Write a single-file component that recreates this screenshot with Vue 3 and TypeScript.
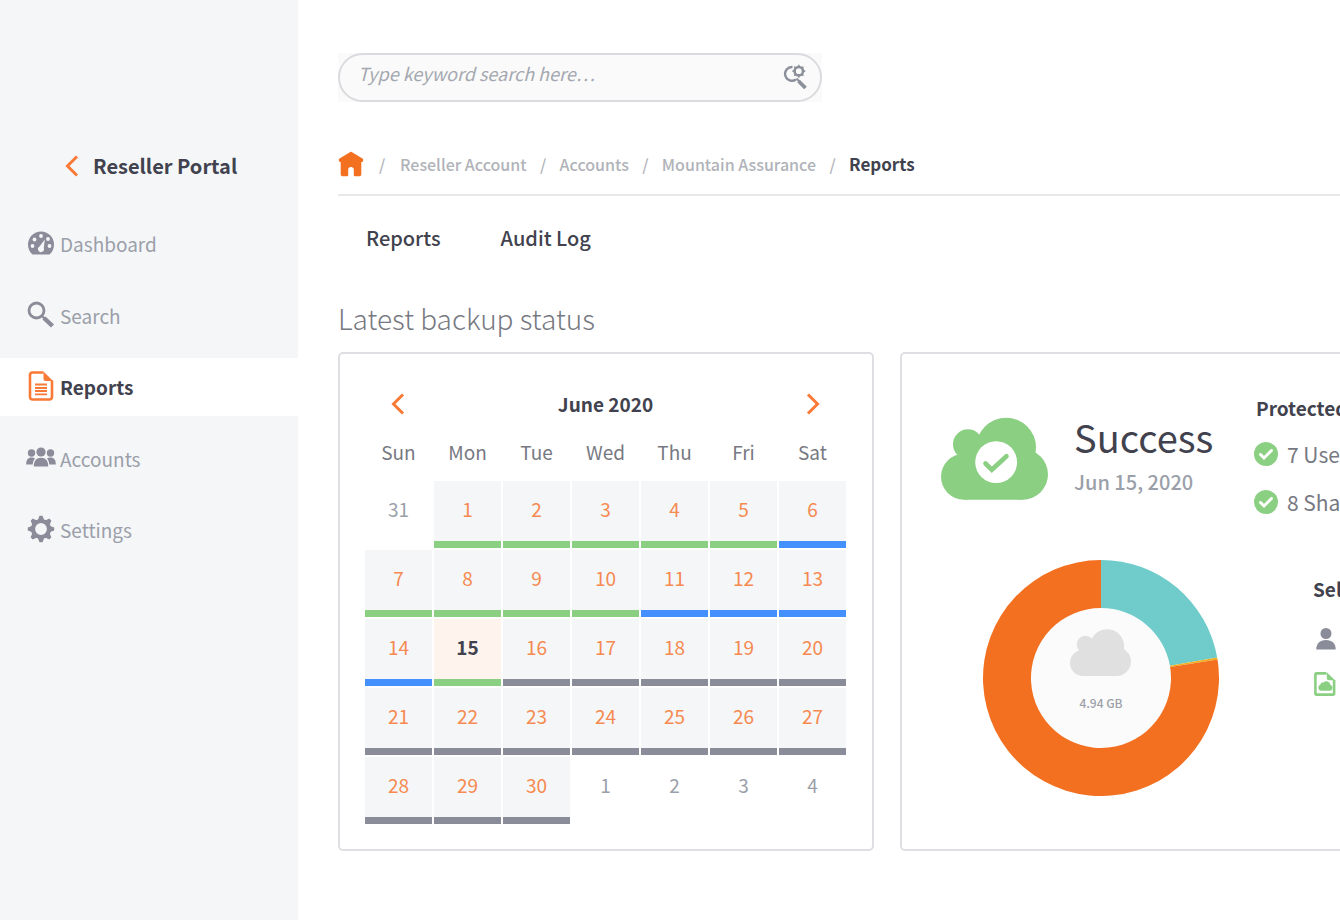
<script setup lang="ts">
import { ref } from 'vue'

type Status = 'ok' | 'partial' | 'none' | 'outside'

interface Day {
  label: number
  status: Status
}

interface NavItem {
  id: string
  label: string
}

const navItems: NavItem[] = [
  { id: 'dashboard', label: 'Dashboard' },
  { id: 'search', label: 'Search' },
  { id: 'reports', label: 'Reports' },
  { id: 'accounts', label: 'Accounts' },
  { id: 'settings', label: 'Settings' },
]
const active = ref('reports')

const crumbs = ['Reseller Account', 'Accounts', 'Mountain Assurance']
const weekdays = ['Sun', 'Mon', 'Tue', 'Wed', 'Thu', 'Fri', 'Sat']
const partialDays = [6, 11, 12, 13, 14]
const selected = ref(15)
const query = ref('')

function statusOf(day: number): Status {
  if (partialDays.includes(day)) return 'partial'
  return day <= 15 ? 'ok' : 'none'
}

const days: Day[] = [
  { label: 31, status: 'outside' },
  ...Array.from({ length: 30 }, (_, i): Day => ({ label: i + 1, status: statusOf(i + 1) })),
  ...[1, 2, 3, 4].map((label): Day => ({ label, status: 'outside' })),
]
const weeks = Array.from({ length: 5 }, (_, w) => days.slice(w * 7, w * 7 + 7))

const protectedItems = ['7 Users', '8 Shared Drives']

function point(radius: number, degrees: number): string {
  const a = (degrees * Math.PI) / 180
  return `${118 + radius * Math.sin(a)} ${118 - radius * Math.cos(a)}`
}

function slice(from: number, to: number): string {
  const large = to - from > 180 ? 1 : 0
  return `M${point(118, from)}A118 118 0 ${large} 1 ${point(118, to)}L${point(70, to)}A70 70 0 ${large} 0 ${point(70, from)}Z`
}

const slices = [
  { path: slice(0, 80), color: '#6fcccb' },
  { path: slice(80, 81), color: '#f2b01e' },
  { path: slice(81, 360), color: '#f37021' },
]

const gearTeeth = [0, 45, 90, 135, 180, 225, 270, 315]
</script>

<template>
  <div class="app">
    <aside class="sidebar">
      <a class="back" href="#portal">
        <svg class="chevron" viewBox="0 0 14 22" aria-hidden="true"><path d="M12 1.500 2.500 11 12 20.500" /></svg>
        <span>Reseller Portal</span>
      </a>
      <nav class="nav" aria-label="Main">
        <a
          v-for="item in navItems"
          :key="item.id"
          class="nav-item"
          :class="{ active: item.id === active }"
          :href="'#' + item.id"
          @click="active = item.id"
        >
          <svg v-if="item.id === 'dashboard'" class="nav-icon" viewBox="0 0 30 30" aria-hidden="true">
            <path fill="currentColor" d="M6.500 26.500C3.500 24 2 20.500 2 16.500a13 13 0 0 1 26 0c0 4-1.500 7.500-4.500 10Z" />
            <g fill="#f4f6f8">
              <circle cx="6.500" cy="18" r="1.900" /><circle cx="8.500" cy="11.500" r="1.900" />
              <circle cx="15" cy="8" r="1.900" /><circle cx="22" cy="11" r="1.900" /><circle cx="23.500" cy="18" r="1.900" />
              <path d="m18.800 11.500-1 8.500a3 3 0 1 1-4.300-1.500Z" />
            </g>
          </svg>
          <svg v-else-if="item.id === 'search'" class="nav-icon" viewBox="0 0 30 30" aria-hidden="true">
            <circle cx="10.500" cy="10.500" r="7.500" fill="none" stroke="currentColor" stroke-width="2.800" />
            <path d="m18 18 8.500 8" stroke="currentColor" stroke-width="4.400" />
            <path d="m15.500 15.500 4 4" stroke="currentColor" stroke-width="2.400" />
          </svg>
          <svg v-else-if="item.id === 'reports'" class="nav-icon accent" viewBox="0 0 30 30" aria-hidden="true">
            <path d="M17.500 1.500H6.500a2.500 2.500 0 0 0-2.500 2.500v22a2.500 2.500 0 0 0 2.500 2.500h17A2.500 2.500 0 0 0 26 26V9.500" fill="none" stroke="currentColor" stroke-width="2.600" />
            <path d="M17.500.500 27 10h-7.500a2 2 0 0 1-2-2Z" fill="currentColor" />
            <path d="M9 13.500h12M9 17h12M9 20h12M9 23.300h12" stroke="currentColor" stroke-width="1.800" />
          </svg>
          <svg v-else-if="item.id === 'accounts'" class="nav-icon" viewBox="0 0 30 30" aria-hidden="true">
            <g fill="currentColor">
              <circle cx="5.500" cy="10" r="3.700" /><circle cx="24.500" cy="10" r="3.700" />
              <circle cx="15" cy="9" r="4.600" />
              <path d="M.2 21.500c0-5 1.800-7 5.300-7 1.500 0 2.700.3 3.600 1-1.600 1.500-2.200 3.500-2.300 6Z" />
              <path d="M29.800 21.500c0-5-1.800-7-5.300-7-1.500 0-2.700.3-3.600 1 1.600 1.500 2.200 3.500 2.300 6Z" />
              <path d="M7.800 23.500c0-6 2.400-8.800 7.200-8.800s7.200 2.800 7.200 8.800Z" />
            </g>
          </svg>
          <svg v-else class="nav-icon" viewBox="0 0 30 30" aria-hidden="true">
            <circle cx="15" cy="15" r="8" fill="none" stroke="currentColor" stroke-width="4.200" />
            <path v-for="deg in gearTeeth" :key="deg" d="M11.700 6.500 13.500 1.800h3l1.800 4.700Z" fill="currentColor" :transform="`rotate(${deg} 15 15)`" />
          </svg>
          <span>{{ item.label }}</span>
        </a>
      </nav>
    </aside>

    <main class="main">
      <form class="search" role="search" @submit.prevent>
        <div class="search-pill">
          <input v-model="query" type="search" aria-label="Keyword search" placeholder="Type keyword search here…" />
          <button type="submit" aria-label="Search">
            <svg viewBox="0 0 26 26" aria-hidden="true">
              <path d="M10.500 3A6.900 6.900 0 1 0 14 15.500" fill="none" stroke="currentColor" stroke-width="2.400" />
              <circle cx="16.800" cy="7.200" r="4.200" fill="none" stroke="currentColor" stroke-width="2.600" />
              <path v-for="deg in gearTeeth" :key="deg" d="M15.700 2.800 16.200.700h1.200l.5 2.100Z" fill="currentColor" :transform="`rotate(${deg} 16.800 7.200)`" />
              <path d="m14.500 14.500 3 3" stroke="currentColor" stroke-width="2" />
              <path d="m16.500 17 7 7" stroke="currentColor" stroke-width="3.800" />
            </svg>
          </button>
        </div>
      </form>

      <nav class="crumbs" aria-label="Breadcrumb">
        <a class="home" href="#home" aria-label="Home">
          <svg viewBox="0 0 26 26" aria-hidden="true">
            <path fill="currentColor" d="M11.500 1.500a2 2 0 0 1 3 0L24.500 7.500c.9.700.9 1.500.5 2.700-.3.600-.8.800-1.700.8v12.500a1.800 1.800 0 0 1-1.800 1.800h-4.700a1 1 0 0 1-1-1v-5.500a2.800 2.800 0 0 0-5.600 0v5.500a1 1 0 0 1-1 1H4.500a1.800 1.800 0 0 1-1.800-1.800V11c-.9 0-1.400-.2-1.700-.8-.4-1.200-.4-2 .5-2.700Z" />
          </svg>
        </a>
        <template v-for="crumb in crumbs" :key="crumb">
          <span class="sep">/</span>
          <a href="#crumb">{{ crumb }}</a>
        </template>
        <span class="sep">/</span>
        <span class="current" aria-current="page">Reports</span>
      </nav>

      <nav class="tabs" aria-label="Report views">
        <a href="#reports-tab">Reports</a>
        <a href="#audit-log">Audit Log</a>
      </nav>

      <h1>Latest backup status</h1>

      <div class="cards">
        <section class="card calendar" aria-label="Backup calendar">
          <header class="month">
            <button type="button" aria-label="Previous month">
              <svg class="chevron" viewBox="0 0 14 22" aria-hidden="true"><path d="M12 1.500 2.500 11 12 20.500" /></svg>
            </button>
            <h2>June 2020</h2>
            <button type="button" aria-label="Next month">
              <svg class="chevron" viewBox="0 0 14 22" aria-hidden="true"><path d="M2 1.500 11.500 11 2 20.500" /></svg>
            </button>
          </header>
          <table>
            <thead>
              <tr><th v-for="name in weekdays" :key="name" scope="col">{{ name }}</th></tr>
            </thead>
            <tbody>
              <tr v-for="(week, w) in weeks" :key="w">
                <td v-for="(day, d) in week" :key="d">
                  <button
                    v-if="day.status !== 'outside'"
                    type="button"
                    class="day"
                    :class="[day.status, { selected: day.label === selected }]"
                    @click="selected = day.label"
                  >{{ day.label }}</button>
                  <span v-else class="day outside">{{ day.label }}</span>
                </td>
              </tr>
            </tbody>
          </table>
        </section>

        <section class="card details" aria-label="Backup details">
          <div class="summary">
            <svg class="cloud" viewBox="0 0 322 248" aria-hidden="true">
              <g fill="#8bcf83">
                <circle cx="196" cy="91" r="90" /><circle cx="81" cy="81" r="45" />
                <circle cx="69" cy="179" r="69" /><circle cx="246" cy="172" r="76" />
                <path d="M69 100h177v148H69Z" />
              </g>
              <circle cx="166" cy="135" r="63" fill="#fff" />
              <path d="m134 139 19 19 44-41" fill="none" stroke="#8bcf83" stroke-width="14" stroke-linecap="round" />
            </svg>
            <div class="result">
              <strong>Success</strong>
              <time datetime="2020-06-15">Jun 15, 2020</time>
            </div>
            <div class="protected">
              <h3>Protected</h3>
              <ul>
                <li v-for="entry in protectedItems" :key="entry">
                  <svg viewBox="0 0 24 24" aria-hidden="true">
                    <circle cx="12" cy="12" r="12" fill="#8bcf83" />
                    <path d="m6.500 12.500 3.500 3.500 7.500-7.500" fill="none" stroke="#fff" stroke-width="3" stroke-linecap="round" />
                  </svg>
                  <span>{{ entry }}</span>
                </li>
              </ul>
            </div>
          </div>
          <div class="usage">
            <svg class="donut" viewBox="0 0 236 236" role="img" aria-label="Storage used: 4.94 GB">
              <circle cx="118" cy="118" r="71" fill="#fbfbfb" />
              <path v-for="part in slices" :key="part.color" :d="part.path" :fill="part.color" />
              <svg x="87" y="69" width="61" height="47" viewBox="0 0 322 248">
                <g fill="#e0e0e0">
                  <circle cx="196" cy="91" r="90" /><circle cx="81" cy="81" r="45" />
                  <circle cx="69" cy="179" r="69" /><circle cx="246" cy="172" r="76" />
                  <path d="M69 100h177v148H69Z" />
                </g>
              </svg>
              <text class="donut-label" x="118" y="148" text-anchor="middle">4.94 GB</text>
            </svg>
            <div class="legend">
              <h3>Selected</h3>
              <ul>
                <li>
                  <svg viewBox="0 0 24 24" aria-hidden="true">
                    <circle cx="13" cy="6.500" r="5.500" fill="#8a8d99" />
                    <path d="M3.300 22.500c0-6 3.500-9.500 9.700-9.500s9.700 3.500 9.700 9.500Z" fill="#8a8d99" />
                  </svg>
                  <span>Users</span>
                </li>
                <li>
                  <svg viewBox="0 0 24 24" aria-hidden="true">
                    <path d="M13.500 1.400H3.500A1 1 0 0 0 2.400 2.500v19a1 1 0 0 0 1.100 1.100h16.500a1 1 0 0 0 1.100-1.100V8" fill="none" stroke="#8bcf83" stroke-width="2.600" />
                    <path d="M13.800.200 22 8.200h-6.200a2 2 0 0 1-2-2Z" fill="#8bcf83" />
                    <path d="M8 18.800a3.200 3.200 0 0 1-.5-6.200 2.300 2.300 0 0 1 3-2 4 4 0 0 1 6.900 2.200 3.100 3.100 0 0 1-.4 6Z" fill="#8bcf83" />
                  </svg>
                  <span>Shared Drives</span>
                </li>
              </ul>
            </div>
          </div>
        </section>
      </div>
    </main>
  </div>
</template>

<style>
body {
  margin: 0;
  background: #fff;
}
</style>

<style scoped>
.app {
  display: flex;
  min-height: 100vh;
  overflow: hidden;
  font-family: "Noto Sans CJK SC", "Noto Sans", sans-serif;
  font-size: 19px;
  line-height: 24px;
  color: #41424e;
}
a {
  color: inherit;
  text-decoration: none;
}
button {
  padding: 0;
  border: 0;
  background: none;
  font: inherit;
  color: inherit;
  cursor: pointer;
}
h1, h2, h3, ul {
  margin: 0;
  padding: 0;
  list-style: none;
}
.chevron {
  display: block;
  width: 14px;
  height: 22px;
  fill: none;
  stroke: #f97a36;
  stroke-width: 3;
}
.sidebar {
  flex: none;
  width: 298px;
  padding-top: 154px;
  box-sizing: border-box;
  background: #f4f6f8;
}
.back {
  display: flex;
  align-items: center;
  gap: 14px;
  margin-left: 65px;
  font-size: 20px;
  font-weight: 700;
}
.nav {
  display: flex;
  flex-direction: column;
  justify-content: space-between;
  height: 344px;
  margin-top: 37px;
}
.nav-item {
  display: flex;
  align-items: center;
  gap: 4px;
  height: 58px;
  padding: 0 0 2px 26px;
  box-sizing: border-box;
  color: #9b9fa9;
}
.nav-item.active {
  background: #fff;
  color: #41424e;
  font-weight: 700;
}
.nav-item span {
  padding-top: 2px;
}
.nav-icon {
  width: 30px;
  height: 30px;
  color: #8a8d99;
}
.nav-icon.accent {
  color: #f97a36;
}
.main {
  flex: 1;
  min-width: 0;
  padding: 53px 0 68px 40px;
}
.search {
  width: 484px;
  background: #fafafa;
}
.search-pill {
  display: flex;
  align-items: center;
  height: 49px;
  box-sizing: border-box;
  padding: 0 12px 2px 18px;
  border: 2px solid #d9dbde;
  border-radius: 25px;
}
.search input {
  flex: 1;
  min-width: 0;
  padding: 0 0 8px;
  border: 0;
  outline: 0;
  background: none;
  font: italic 18px/24px "Noto Sans CJK SC", "Noto Sans", sans-serif;
  color: #41424e;
}
.search input::placeholder {
  color: #a4a8b0;
  opacity: 1;
}
.search button {
  color: #8a8f99;
}
.search svg {
  display: block;
  width: 26px;
  height: 26px;
}
.crumbs {
  display: flex;
  align-items: center;
  height: 58px;
  padding-bottom: 1px;
  box-sizing: content-box;
  margin-top: 33px;
  border-bottom: 2px solid #e8e9ea;
  font-size: 16px;
  font-weight: 500;
  color: #b0b3b9;
}
.home {
  color: #f37021;
}
.home svg {
  display: block;
  width: 26px;
  height: 26px;
}
.sep {
  width: 33px;
  text-align: center;
}
.home + .sep {
  width: 36px;
}
.current {
  font-size: 17px;
  font-weight: 700;
  color: #41424e;
}
.tabs {
  display: flex;
  gap: 60px;
  margin: 30px 0 0 28px;
  font-size: 20px;
  font-weight: 500;
}
h1 {
  margin-top: 48px;
  font-size: 28px;
  line-height: 40px;
  font-weight: 300;
  color: #777982;
}
.cards {
  display: flex;
  gap: 26px;
  margin-top: 14px;
}
.card {
  flex: none;
  box-sizing: border-box;
  border: 2px solid #dddfe2;
  border-radius: 5px;
}
.calendar {
  width: 536px;
  padding: 24px 24px 23px 23px;
}
.month {
  display: flex;
  align-items: center;
  justify-content: space-between;
  height: 52px;
  padding: 0 28px;
}
.month h2 {
  font-size: 19px;
  line-height: 24px;
  font-weight: 700;
}
table {
  width: 100%;
  table-layout: fixed;
  border-spacing: 2px;
}
th {
  height: 47px;
  padding: 0 0 8px;
  box-sizing: border-box;
  font-weight: 400;
  color: #777982;
}
td {
  padding: 0;
}
.day {
  display: block;
  width: 100%;
  height: 67px;
  box-sizing: border-box;
  border-bottom: 7px solid transparent;
  background: #f4f6f8;
  line-height: 56px;
  padding-bottom: 4px;
  text-align: center;
  font-weight: 400;
  color: #f68a50;
}
.day.ok {
  border-bottom-color: #8bcf83;
}
.day.partial {
  border-bottom-color: #4590ff;
}
.day.none {
  border-bottom-color: #8a8d99;
}
.day.selected {
  background: #fef3ed;
  font-weight: 700;
  color: #41424e;
}
.day.outside {
  background: none;
  color: #9b9fa9;
}
.details {
  width: 620px;
  padding: 42px 0 0 39px;
}
.summary {
  display: flex;
  align-items: flex-start;
}
.cloud {
  width: 107px;
  height: 83px;
  margin-top: 21px;
}
.result {
  display: flex;
  flex-direction: column;
  width: 182px;
  margin: 17px 0 0 26px;
}
.result strong {
  font-size: 38px;
  line-height: 48px;
  font-weight: 400;
}
.result time {
  margin-top: 9px;
  font-size: 20px;
  font-weight: 500;
  color: #9b9fa9;
}
h3 {
  font-size: 19px;
  line-height: 24px;
  font-weight: 700;
}
li {
  display: flex;
  align-items: center;
  height: 24px;
  font-size: 21px;
  color: #777982;
  white-space: nowrap;
}
li svg {
  width: 24px;
  height: 24px;
  margin-right: 9px;
}
.protected ul {
  display: grid;
  gap: 24px;
  margin: 22px 0 0 -2px;
}
.usage {
  display: flex;
  align-items: flex-start;
  margin: 46px 0 0 42px;
}
.donut {
  width: 236px;
  height: 236px;
}
.donut-label {
  font-size: 12px;
  font-weight: 500;
  fill: #9b9fa9;
}
.legend {
  margin: 17px 0 0 94px;
}
.legend ul {
  display: grid;
  gap: 21px;
  margin-top: 26px;
}
</style>
